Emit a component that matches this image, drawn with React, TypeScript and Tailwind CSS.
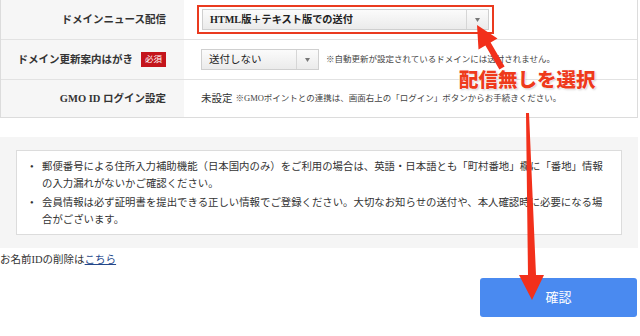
const serif = "font-['Liberation_Serif','Noto_Sans_CJK_JP',serif]"

function SelectBox({ label, width, bold }: { label: string; width: string; bold?: boolean }) {
  return (
    <div className={`flex h-[21px] items-stretch border border-[#cfcfcf] bg-linear-to-b from-[#fbfbfb] to-[#ebebeb] ${width}`}>
      <div className={`flex flex-1 items-center pl-[7px] text-[#222] ${bold ? "text-[10.2px] font-bold" : "text-[10.5px]"}`}>
        {label}
      </div>
      <div className="flex w-[22px] items-center justify-center border-l border-[#d6d6d6]">
        <svg width="5" height="4" viewBox="0 0 5 4">
          <path d="M0 0 L5 0 L2.5 4 Z" fill="#777" />
        </svg>
      </div>
    </div>
  )
}

function Row({ label, children, last }: { label: React.ReactNode; children: React.ReactNode; last?: boolean }) {
  return (
    <div className={`flex ${last ? "h-[37px]" : "h-[40px] border-b border-[#e2e2e2]"}`}>
      <div className="flex w-[183px] items-center justify-end bg-[#f6f6f6] pr-[18px] text-[10.5px] font-bold text-[#333]">
        {label}
      </div>
      <div className="flex flex-1 items-center">{children}</div>
    </div>
  )
}

export default function App() {
  return (
    <div className={`relative h-[336px] w-[640px] overflow-hidden bg-white text-[#333] ${serif}`}>
      <div className="w-[638px] border-x border-b border-[#dcdcdc]">
        <Row label="ドメインニュース配信">
          <div className="ml-[13px] w-[297px] border-2 border-[#ea3a1f] px-[3px] py-[2px]">
            <SelectBox label="HTML版＋テキスト版での送付" width="w-full" bold />
          </div>
        </Row>
        <Row
          label={
            <>
              <span>ドメイン更新案内はがき</span>
              <span className="ml-[8px] flex h-[15px] items-center bg-[#c4151c] px-[4px] text-[8.5px] font-normal text-white">
                必須
              </span>
            </>
          }
        >
          <div className="ml-[17px]">
            <SelectBox label="送付しない" width="w-[118px]" />
          </div>
          <span className="ml-[7px] text-[8.5px] text-[#444]">※自動更新が設定されているドメインには送付されません。</span>
        </Row>
        <Row label="GMO ID ログイン設定" last>
          <span className="ml-[17px] text-[10.5px]">未設定</span>
          <span className="ml-[3px] text-[8.5px] text-[#444]">
            ※GMOポイントとの連携は、画面右上の「ログイン」ボタンからお手続きください。
          </span>
        </Row>
      </div>

      <div className="mt-[19px] w-[638px] bg-[#f5f5f5] px-[16px] py-[13px]">
        <div className="border border-[#dcdcdc] bg-white pb-[6px] pl-[13px] pr-[10px] pt-[7px]">
          <ul className="flex flex-col gap-[2px] text-[10.4px] leading-[17px] text-[#333]">
            <li className="flex">
              <span className="w-[12px] shrink-0">•</span>
              <span className="whitespace-nowrap">
                郵便番号による住所入力補助機能（日本国内のみ）をご利用の場合は、英語・日本語とも「町村番地」欄に「番地」情報
                <br />
                の入力漏れがないかご確認ください。
              </span>
            </li>
            <li className="flex">
              <span className="w-[12px] shrink-0">•</span>
              <span className="whitespace-nowrap">
                会員情報は必ず証明書を提出できる正しい情報でご登録ください。大切なお知らせの送付や、本人確認時に必要になる場
                <br />
                合がございます。
              </span>
            </li>
          </ul>
        </div>
      </div>

      <p className="mt-[5px] text-[10.5px] leading-[14px]">
        お名前IDの削除は
        <a href="#" className="text-[#24478a] underline">
          こちら
        </a>
      </p>

      <div className="mt-[11px] flex w-[637px] justify-end">
        <button className="flex h-[39px] w-[157px] items-center justify-center rounded-[3px] bg-[#4a8af0] text-[13px] text-white">
          確認
        </button>
      </div>

      {/* annotation overlay */}
      <svg className="pointer-events-none absolute inset-0" width="640" height="336" viewBox="0 0 640 336">
        <polygon
          points="477,25 497.5,38.5 490.6,42.5 504.6,66.5 499.4,69.5 485.4,45.5 478.5,49.5"
          fill="#f2301b"
        />
        <polygon points="526,113 529,113 536,275 544,275 532,300 519,275 528,275" fill="#f2301b" />
      </svg>
      <div className="pointer-events-none absolute left-[459px] top-[67px] font-['Noto_Sans_CJK_JP',sans-serif] text-[19.5px] font-black leading-[24px] text-[#ee3a1c] [text-shadow:0_0_2px_#fff,0_0_2px_#fff,0_0_1px_#fff,1px_1px_2px_rgba(0,0,0,0.25)]">
        配信無しを選択
      </div>
    </div>
  )
}
